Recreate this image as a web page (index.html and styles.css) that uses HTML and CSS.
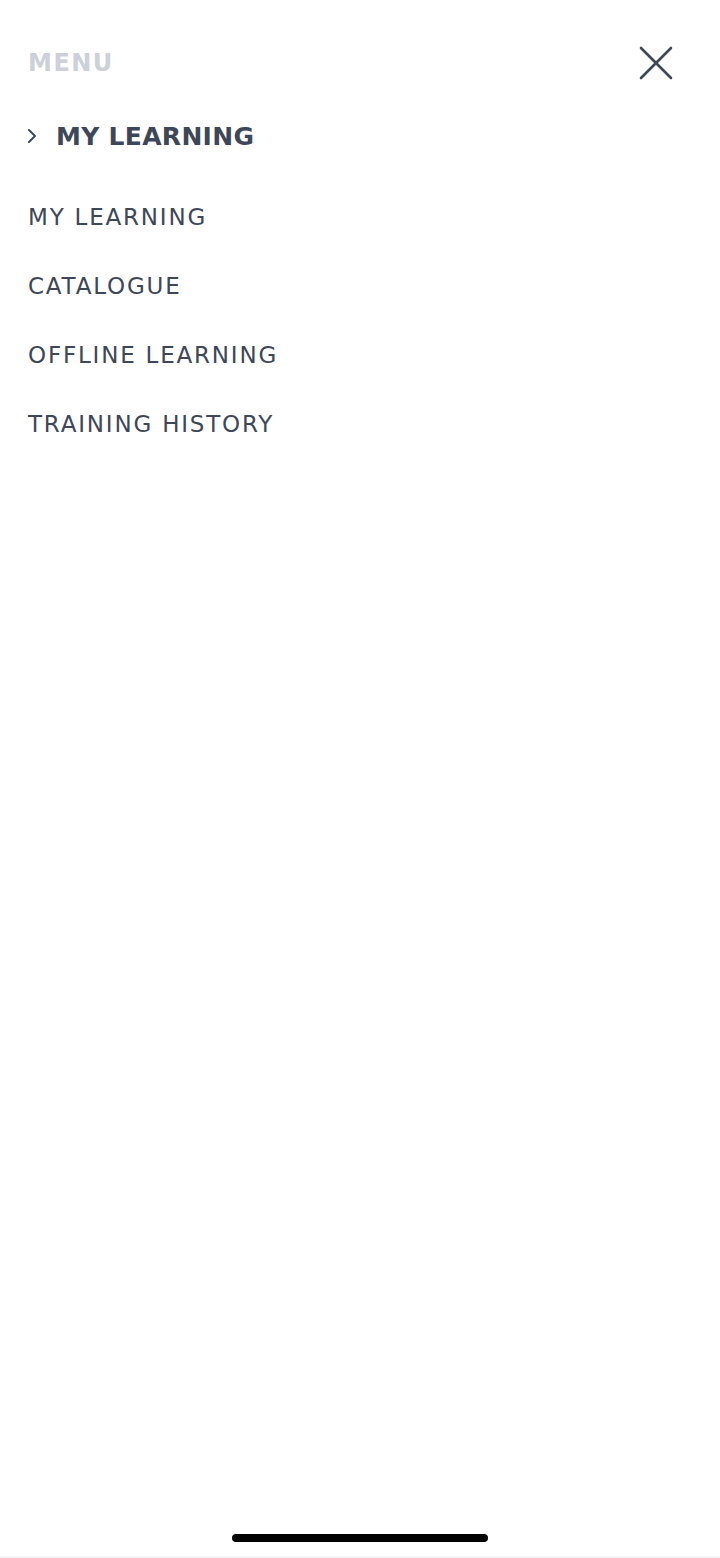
FILE: index.html
```html
<!DOCTYPE html>
<html>

<head>
    <title>Menu</title>
    <link rel="stylesheet" href="styles.css">
</head>

<body>
    <div class="screen">
        <header class="menu-header">
            <span class="menu-title">MENU</span>
            <button class="close-button" aria-label="Close">
                <svg width="34" height="34" viewBox="0 0 34 34">
                    <path d="M2 2 L32 32 M32 2 L2 32" stroke="#3e4758" stroke-width="2.6" stroke-linecap="round" fill="none"/>
                </svg>
            </button>
        </header>

        <div class="section">
            <svg class="chevron" width="10" height="16" viewBox="0 0 10 16">
                <path d="M2 2 L8 8 L2 14" stroke="#3e4758" stroke-width="2" stroke-linecap="round" stroke-linejoin="round" fill="none"/>
            </svg>
            <span class="section-title">MY LEARNING</span>
        </div>

        <ul class="nav-list">
            <li><a href="#">MY LEARNING</a></li>
            <li><a href="#">CATALOGUE</a></li>
            <li><a href="#">OFFLINE LEARNING</a></li>
            <li><a href="#">TRAINING HISTORY</a></li>
        </ul>

        <div class="home-bar"></div>
    </div>
</body>

</html>
```

FILE: styles.css
```css
body {
    margin: 0;
    padding: 0;
    background: #ffffff;
    font-family: "DejaVu Sans", sans-serif;
}

.screen {
    height: 1558px;
    display: flex;
    flex-direction: column;
    box-sizing: border-box;
    border-bottom: 2px solid #f3f3f5;
}

.menu-header {
    display: flex;
    justify-content: space-between;
    align-items: center;
    padding: 46px 47px 0 28px;
    height: 34px;
}

.menu-title {
    color: #cbd0d9;
    font-weight: bold;
    font-size: 24px;
    letter-spacing: 1.5px;
}

.close-button {
    background: transparent;
    border: none;
    padding: 0;
    width: 34px;
    height: 34px;
}

.section {
    display: flex;
    align-items: center;
    padding: 40px 0 0 27px;
    gap: 19px;
    height: 32px;
}

.section-title {
    color: #3e4758;
    font-weight: bold;
    font-size: 25px;
    letter-spacing: 0.3px;
}

.nav-list {
    list-style: none;
    margin: 51px 0 0 0;
    padding: 0 0 0 28px;
    display: flex;
    flex-direction: column;
    gap: 41px;
}

.nav-list li {
    height: 28px;
    line-height: 28px;
}

.nav-list a {
    color: #3e4758;
    text-decoration: none;
    font-size: 23px;
    letter-spacing: 1.8px;
}

.home-bar {
    margin: auto auto 14px auto;
    width: 256px;
    height: 8px;
    border-radius: 4px;
    background: #000000;
}
```
